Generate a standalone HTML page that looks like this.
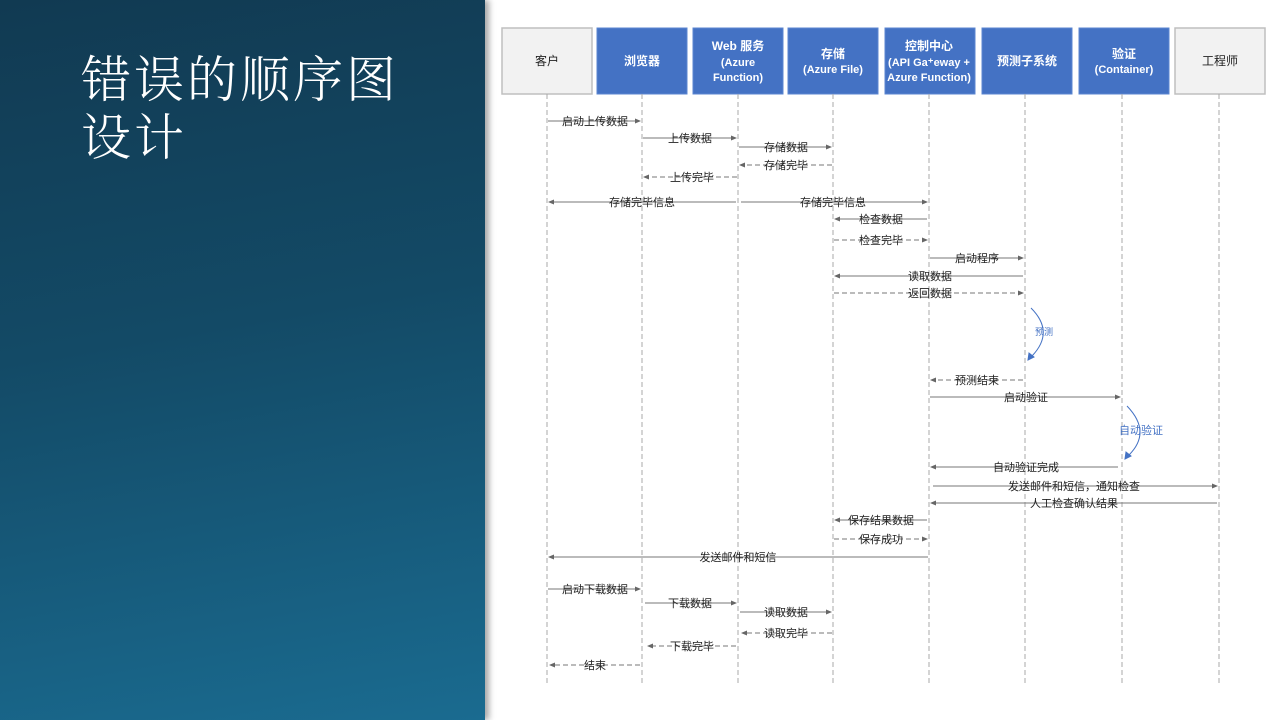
<!DOCTYPE html>
<html><head><meta charset="utf-8"><style>
html,body{margin:0;padding:0;width:1280px;height:720px;overflow:hidden;background:#fff}
#left{position:absolute;left:0;top:0;width:485px;height:720px;background:linear-gradient(170deg,#113a52 0%,#134a66 45%,#1a6b90 100%);box-shadow:4px 0 6px rgba(0,0,0,0.35)}
#title{position:absolute;left:81px;top:51px;color:#fff;font-family:"Liberation Serif","Noto Serif CJK SC",serif;font-size:50px;line-height:58px;letter-spacing:3px;font-weight:300}
svg{position:absolute;left:0;top:0}
</style></head><body>
<div id="left"><div id="title">错误的顺序图<br>设计</div></div>
<svg width="1280" height="720" font-family="Liberation Sans, Noto Sans CJK SC, sans-serif">
<defs><marker id="a" markerWidth="6" markerHeight="6" refX="5" refY="3" orient="auto" markerUnits="userSpaceOnUse"><path d="M0,0.5 L6,3 L0,5.5z" fill="#666"/></marker></defs>
<g fill="#4472c4" stroke="#5b86d0">
<rect x="502" y="28" width="90" height="66" fill="#f2f2f2" stroke="#bfbfbf" stroke-width="1.5"/>
<rect x="597" y="28" width="90" height="66"/>
<rect x="693" y="28" width="90" height="66"/>
<rect x="788" y="28" width="90" height="66"/>
<rect x="885" y="28" width="90" height="66"/>
<rect x="982" y="28" width="90" height="66"/>
<rect x="1079" y="28" width="90" height="66"/>
<rect x="1175" y="28" width="90" height="66" fill="#f2f2f2" stroke="#bfbfbf" stroke-width="1.5"/>
</g>
<g font-size="12" text-anchor="middle" fill="#fff" font-weight="bold">
<text x="547" y="65" fill="#222" font-weight="normal">客户</text>
<text x="642" y="65">浏览器</text>
<text x="738" y="50">Web 服务</text><text x="738" y="66" font-size="11">(Azure</text><text x="738" y="81" font-size="11">Function)</text>
<text x="833" y="58">存储</text><text x="833" y="73" font-size="11">(Azure File)</text>
<text x="929" y="50">控制中心</text><text x="929" y="66" font-size="11">(API Ga⁺eway +</text><text x="929" y="81" font-size="11">Azure Function)</text>
<text x="1027" y="65">预测子系统</text>
<text x="1124" y="58">验证</text><text x="1124" y="73" font-size="11">(Container)</text>
<text x="1220" y="65" fill="#222" font-weight="normal">工程师</text>
</g>
<g stroke="#aaa" stroke-dasharray="5,3" stroke-width="1">
<line x1="547" y1="94" x2="547" y2="686"/><line x1="642" y1="94" x2="642" y2="686"/><line x1="738" y1="94" x2="738" y2="686"/><line x1="833" y1="94" x2="833" y2="686"/><line x1="929" y1="94" x2="929" y2="686"/><line x1="1025" y1="94" x2="1025" y2="686"/><line x1="1122" y1="94" x2="1122" y2="686"/><line x1="1219" y1="94" x2="1219" y2="686"/>
</g>
<g stroke="#777" stroke-width="1" marker-end="url(#a)">
<line x1="548" y1="121" x2="640" y2="121"/>
<line x1="643" y1="138" x2="736" y2="138"/>
<line x1="739" y1="147" x2="831" y2="147"/>
<line x1="832" y1="165" x2="740" y2="165" stroke-dasharray="5,3"/>
<line x1="737" y1="177" x2="644" y2="177" stroke-dasharray="5,3"/>
<line x1="736" y1="202" x2="549" y2="202"/>
<line x1="741" y1="202" x2="927" y2="202"/>
<line x1="927" y1="219" x2="835" y2="219"/>
<line x1="834" y1="240" x2="927" y2="240" stroke-dasharray="5,3"/>
<line x1="930" y1="258" x2="1023" y2="258"/>
<line x1="1023" y1="276" x2="835" y2="276"/>
<line x1="834" y1="293" x2="1023" y2="293" stroke-dasharray="5,3"/>
<line x1="1023" y1="380" x2="931" y2="380" stroke-dasharray="5,3"/>
<line x1="930" y1="397" x2="1120" y2="397"/>
<line x1="1118" y1="467" x2="931" y2="467"/>
<line x1="933" y1="486" x2="1217" y2="486"/>
<line x1="1217" y1="503" x2="931" y2="503"/>
<line x1="927" y1="520" x2="835" y2="520"/>
<line x1="834" y1="539" x2="927" y2="539" stroke-dasharray="5,3"/>
<line x1="928" y1="557" x2="549" y2="557"/>
<line x1="548" y1="589" x2="640" y2="589"/>
<line x1="645" y1="603" x2="736" y2="603"/>
<line x1="740" y1="612" x2="831" y2="612"/>
<line x1="832" y1="633" x2="742" y2="633" stroke-dasharray="5,3"/>
<line x1="736" y1="646" x2="648" y2="646" stroke-dasharray="5,3"/>
<line x1="640" y1="665" x2="550" y2="665" stroke-dasharray="5,3"/>
</g>
<g fill="none" stroke="#4472c4" stroke-width="1">
<path d="M1031,308 Q1055,332 1032,356"/><path d="M1028,360 l1,-7 l5,4z" fill="#4472c4"/>
<path d="M1127,406 Q1152,432 1129,455"/><path d="M1125,459 l1,-7 l5,4z" fill="#4472c4"/>
</g>
<g font-size="11" fill="#4472c4" text-anchor="middle">
<text x="1044" y="335" font-size="9">预测</text>
<text x="1141" y="434">自动验证</text>
</g>
<g font-size="11" fill="#222" text-anchor="middle">
<text x="595" y="125">启动上传数据</text>
<text x="690" y="142">上传数据</text>
<text x="786" y="151">存储数据</text>
<text x="786" y="169">存储完毕</text>
<text x="692" y="181">上传完毕</text>
<text x="642" y="206">存储完毕信息</text>
<text x="833" y="206">存储完毕信息</text>
<text x="881" y="223">检查数据</text>
<text x="881" y="244">检查完毕</text>
<text x="977" y="262">启动程序</text>
<text x="930" y="280">读取数据</text>
<text x="930" y="297">返回数据</text>
<text x="977" y="384">预测结束</text>
<text x="1026" y="401">启动验证</text>
<text x="1026" y="471">自动验证完成</text>
<text x="1074" y="490">发送邮件和短信，通知检查</text>
<text x="1074" y="507">人工检查确认结果</text>
<text x="881" y="524">保存结果数据</text>
<text x="881" y="543">保存成功</text>
<text x="738" y="561">发送邮件和短信</text>
<text x="595" y="593">启动下载数据</text>
<text x="690" y="607">下载数据</text>
<text x="786" y="616">读取数据</text>
<text x="786" y="637">读取完毕</text>
<text x="692" y="650">下载完毕</text>
<text x="595" y="669">结束</text>
</g>
</svg>
</body></html>
